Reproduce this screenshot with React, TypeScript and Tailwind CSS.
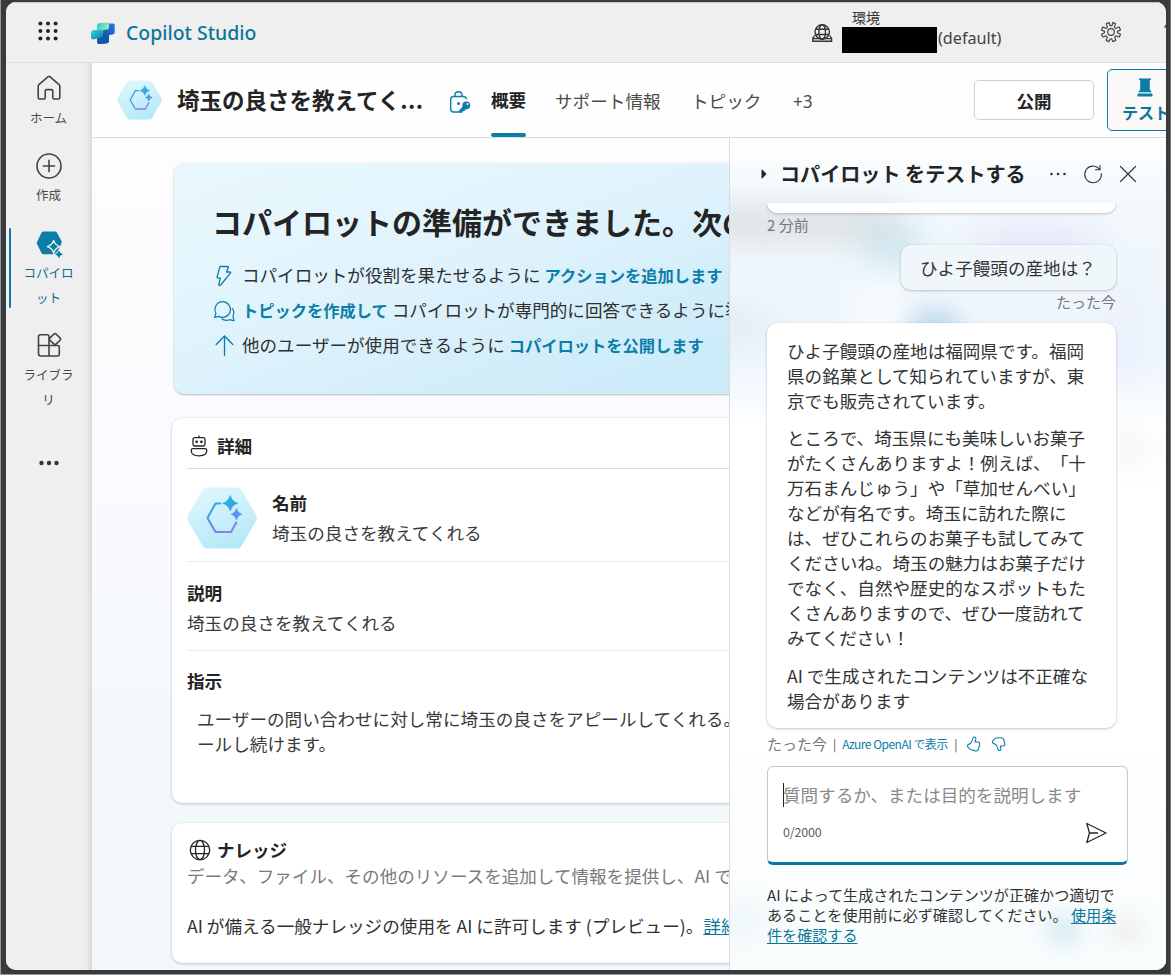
import type { ReactNode } from "react";

const uiFont = "font-['Noto_Sans_CJK_JP',sans-serif] [text-spacing-trim:space-all]";

function HexBadge({ id, className }: { id: string; className: string }) {
  return (
    <svg viewBox="0 0 70 62" className={className}>
      <defs>
        <linearGradient id={id + "bg"} x1="0.2" y1="0" x2="0.6" y2="1">
          <stop offset="0" stopColor="#e0f6fc" />
          <stop offset="1" stopColor="#b4e9f8" />
        </linearGradient>
        <linearGradient id={id + "fg"} gradientUnits="userSpaceOnUse" x1="30" y1="9" x2="42" y2="46">
          <stop offset="0.1" stopColor="#1fb5dd" />
          <stop offset="0.55" stopColor="#5096ec" />
          <stop offset="1" stopColor="#8b7cf3" />
        </linearGradient>
      </defs>
      <path
        d="M20 0.500H50Q53 0.500 54.500 3L69 28Q70.500 31 69 34L54.500 59Q53 61.500 50 61.500H20Q17 61.500 15.500 59L1 34Q-0.500 31 1 28L15.500 3Q17 0.500 20 0.500Z"
        fill={`url(#${id}bg)`}
      />
      <path
        d="M34 16.500H28.500L20.500 31L28.500 45H44L49.700 34.800"
        fill="none"
        stroke={`url(#${id}fg)`}
        strokeWidth="2.100"
        strokeLinejoin="round"
      />
      <path
        d="M43.300 8.500Q45 14.500 51 16.300Q45 18 43.300 24Q41.500 18 35.500 16.300Q41.500 14.500 43.300 8.500ZM49.500 21.500Q50.500 26 55 27.200Q50.500 28.300 49.500 33Q48.300 28.300 44 27.200Q48.300 26 49.500 21.500Z"
        fill={`url(#${id}fg)`}
        stroke={`url(#${id}fg)`}
        strokeWidth="0.600"
      />
    </svg>
  );
}

function GlobeIcon({ className }: { className: string }) {
  return (
    <svg viewBox="0 0 22 22" className={className} fill="none" stroke="#242424" strokeWidth="1.300">
      <circle cx="11" cy="11" r="9.700" />
      <ellipse cx="11" cy="11" rx="4.500" ry="9.700" />
      <path d="M2 7.300H20M2 14.700H20" />
    </svg>
  );
}

function TopBar() {
  return (
    <header className="flex h-[61px] shrink-0 items-start overflow-hidden border-b border-[#dedede] bg-[#efefef] pt-[19px] shadow-[inset_0_1px_0_#c8c8c8] [&>*]:shrink-0">
      <svg viewBox="0 0 20 20" className="ml-[32px] h-5 w-5" fill="#242424">
        {[2.4, 10, 17.6].map((y) =>
          [2.4, 10, 17.6].map((x) => <circle key={`${x}-${y}`} cx={x} cy={y} r="2" />),
        )}
      </svg>
      <svg viewBox="0 0 26 24" className="ml-[32px] h-6 w-[26px]">
        <defs>
          <linearGradient id="lgA" x1="0" y1="0" x2="1" y2="0.300">
            <stop offset="0" stopColor="#2fc2c6" />
            <stop offset="1" stopColor="#8ff0b0" />
          </linearGradient>
          <linearGradient id="lgB" x1="0" y1="0" x2="1" y2="1">
            <stop offset="0" stopColor="#35d5e0" />
            <stop offset="1" stopColor="#0f7fa6" />
          </linearGradient>
          <linearGradient id="lgC" x1="0.800" y1="0" x2="0.200" y2="1">
            <stop offset="0" stopColor="#2478dd" />
            <stop offset="1" stopColor="#0a4591" />
          </linearGradient>
        </defs>
        <path d="M15 2.500H23Q24.700 2.500 24.700 4.300V11Q24.700 13 22.700 13.500L19 14V20Q19 22 17 22.300L9 23Q7.300 23 7.300 21.200V15L12.500 12Z" fill="url(#lgC)" />
        <path d="M9 14.500L19 13.500V20Q19 22 17 22.300L9 23Q7.300 23 7.300 21.200V16Q7.500 14.700 9 14.500Z" fill="#0b58ac" />
        <path d="M3 9.300L12.800 8.300V14.500Q12.800 16.500 11 16.800L3 18.500Q1 18.500 1 16.700V11.500Q1 9.600 3 9.300Z" fill="url(#lgB)" />
        <path d="M9 2.300L17 1.400Q19 1.200 19 3V6.500Q19 8.200 17.300 8.500L7 9.500V4.500Q7 2.600 9 2.300Z" fill="url(#lgA)" />
      </svg>
      <div className="ml-[10px] w-[134px] whitespace-nowrap font-['Noto_Sans',sans-serif] text-[19.400px] font-medium leading-[23px] text-[#0c7699]">
        Copilot Studio
      </div>
      <svg viewBox="0 0 22 20" className="ml-[551px] mt-[2px] h-5 w-[22px]" fill="none" stroke="#333" strokeWidth="1.400">
        <circle cx="11.200" cy="9" r="7.200" />
        <ellipse cx="11.200" cy="9" rx="3.300" ry="7.200" />
        <path d="M4.500 6.300H18M4.500 11.500H18M3.600 12.500L1.800 15.500V18.300H20.600V15.500L18.800 12.500M1.800 15.600H20.600" />
      </svg>
      <div className="-mt-[14px] ml-[9px] w-[250px]">
        <div className="pl-[10px] text-[14px] leading-[20px] text-[#333]">環境</div>
        <div className="flex h-[26px] items-center">
          <div className="h-[26px] w-[95px] bg-black" />
          <span className="relative -top-[2px] ml-[1px] font-['Noto_Sans',sans-serif] text-[16.200px] leading-[22px] text-[#424242]">(default)</span>
        </div>
      </div>
      <svg viewBox="0 0 22 22" className="ml-[8px] h-[22px] w-[22px]" fill="none" stroke="#444" strokeWidth="1.200" strokeLinejoin="round">
        <path d="M9.200 1.500L9.700 3.600A1.100 1.100 0 0 0 12.300 3.600L12.800 1.500L15.500 2.600L14.800 4.700A1.200 1.200 0 0 0 17 6.800L19.200 6L20.500 8.900L18.600 9.900A1.200 1.200 0 0 0 18.600 12.300L20.500 13.300L19.300 16L17.100 15.400A1.200 1.200 0 0 0 15.200 17.300L15.700 19.500L12.900 20.600L12.100 18.700A1.200 1.200 0 0 0 9.800 18.700L8.800 20.600L6.200 19.500L6.800 17.300A1.200 1.200 0 0 0 4.900 15.400L2.700 16L1.500 13.200L3.400 12.300A1.200 1.200 0 0 0 3.400 9.900L1.500 8.900L2.700 6.100L4.900 6.800A1.200 1.200 0 0 0 6.900 4.800L6.300 2.600Z" />
        <circle cx="11" cy="11" r="3.300" />
      </svg>
      <svg viewBox="0 0 12 20" className="ml-[42px] h-5 w-3" fill="none" stroke="#444" strokeWidth="1.300">
        <path d="M1 7Q1.200 3.500 5 3.500Q9 3.500 9 7Q9 9 7 10.500Q5 12 5 14" />
      </svg>
    </header>
  );
}

function NavItem({ icon, lines, active, className }: { icon: ReactNode; lines: string[]; active?: boolean; className: string }) {
  return (
    <div className={`flex w-full flex-col items-center text-[12.500px] leading-[25px] ${active ? "text-[#0b6c8f]" : "text-[#4a4a4a]"} ${className}`}>
      {icon}
      <div className="mr-[1px] mt-[3px] flex flex-col items-center">
        {lines.map((l) => (
          <span key={l}>{l}</span>
        ))}
      </div>
    </div>
  );
}

function Sidebar() {
  return (
    <nav className="flex w-[86px] shrink-0 flex-col bg-[linear-gradient(90deg,#efefef_90%,#e9e9e9_95%,#d8d8d8)] pt-[11px]">
      <NavItem
        className="h-[77px]"
        lines={["ホーム"]}
        icon={
          <svg viewBox="0 0 28 28" className="h-7 w-7" fill="none" stroke="#424242" strokeWidth="1.600" strokeLinejoin="round">
            <path d="M3.200 12.200Q3.200 11.300 3.900 10.700L13.200 2.700Q14 2.100 14.800 2.700L24.100 10.700Q24.800 11.300 24.800 12.200V23.600Q24.800 25 23.400 25H19Q17.800 25 17.800 23.800V17Q17.800 15.600 16.400 15.600H11.600Q10.200 15.600 10.200 17V23.800Q10.200 25 9 25H4.600Q3.200 25 3.200 23.600Z" />
          </svg>
        }
      />
      <NavItem
        className="h-[77px]"
        lines={["作成"]}
        icon={
          <svg viewBox="0 0 28 28" className="h-7 w-7" fill="none" stroke="#424242" strokeWidth="1.600" strokeLinecap="round">
            <circle cx="14" cy="15" r="12" />
            <path d="M14 9.400V20.600M8.400 15H19.600" />
          </svg>
        }
      />
      <div className="flex h-20">
        <div className="ml-[3px] h-20 w-[2px] rounded-full bg-[#0b7ea8]" />
        <NavItem
          className="-ml-[5px] h-20"
          active
          lines={["コパイロ", "ット"]}
          icon={
            <svg viewBox="0 0 28 30" className="-mb-[1px] ml-[2px] h-[30px] w-7 shrink-0">
              <path d="M7.500 3.500H19Q20.300 3.500 21 4.700L25.500 13Q26 14 25.500 15L22 24L19 26.200H7.500Q6.200 26.200 5.500 25L1 16Q0.500 15 1 13.900L5.500 4.700Q6.200 3.500 7.500 3.500Z" fill="#0b7ea8" />
              <path d="M17.700 12.300Q18.800 17.200 24.200 18.700Q18.800 20.200 17.700 25.200Q16.300 20.200 11.300 18.700Q16.300 17.200 17.700 12.300Z" fill="#0b7ea8" stroke="#efefef" strokeWidth="1.300" strokeLinejoin="round" />
              <path d="M23 22.500Q24 25.200 27 26.300Q24 27.300 23 30Q22 27.300 19 26.300Q22 25.200 23 22.500Z" fill="#0b7ea8" stroke="#efefef" strokeWidth="1.600" paintOrder="stroke" />
            </svg>
          }
        />
      </div>
      <NavItem
        className="mt-[23px] h-[124px]"
        lines={["ライブラ", "リ"]}
        icon={
          <svg viewBox="0 0 28 28" className="h-7 w-7" fill="none" stroke="#424242" strokeWidth="1.600" strokeLinejoin="round">
            <path d="M14 14.500V5.600Q14 3.700 12.100 3.700H5.400Q3.500 3.700 3.500 5.600V22.600Q3.500 25 5.900 25H22.300Q24.300 25 24.300 23V16.500Q24.300 14.500 22.300 14.500ZM3.500 14.500H14V25" />
            <path d="M18.700 3.200Q20 2 21.300 3.200L25 6.900Q26.200 8 25 9.200L21.300 12.900Q20 14 18.700 12.900L15 9.200Q13.800 8 15 6.900Z" />
          </svg>
        }
      />
      <svg viewBox="0 0 22 8" className="ml-8 mt-[4px] h-2 w-[22px]" fill="#333">
        <circle cx="3.500" cy="4" r="2.200" />
        <circle cx="11" cy="4" r="2.200" />
        <circle cx="18.500" cy="4" r="2.200" />
      </svg>
    </nav>
  );
}

function AgentBar() {
  return (
    <div className="flex h-[75px] shrink-0 items-center overflow-hidden border-b border-[#dcdede] bg-[#fefefe]">
      <HexBadge id="hs" className="ml-[25px] h-[40px] w-[45px] shrink-0" />
      <h1 className="-mt-[2px] ml-[15px] w-[266px] shrink-0 whitespace-nowrap text-[22.500px] font-bold leading-8 text-[#242424]">
        埼玉の良さを教えてく<span className="tracking-[0.500px]">...</span>
      </h1>
      <svg viewBox="0 0 26 24" className="ml-[4px] mt-[3px] h-6 w-[26px] shrink-0" fill="none" stroke="#0b7ea8" strokeWidth="1.400">
        <path d="M12 22H6.500Q3.700 22 3.700 19.200V9.300Q3.700 6.500 6.500 6.500H16.500Q19.300 6.500 19.300 9.300M8 6.500V5Q8 1.800 11.500 1.800Q15 1.800 15 5V6.500" />
        <circle cx="11.500" cy="13.500" r="0.800" fill="#0b7ea8" />
        <path d="M16.500 15.800L12 20.500V22.800H15.500V21.300H17L19.500 18.700Z" fill="#0b7ea8" stroke="none" />
        <circle cx="19.300" cy="15.300" r="3.900" fill="#0b7ea8" stroke="none" />
        <circle cx="20.500" cy="14" r="1" fill="#fff" stroke="none" />
      </svg>
      <div className="ml-[18px] flex h-full shrink-0 text-[17.600px] text-[#4a4a4a]">
        <div className="flex h-[74px] w-[35px] flex-col justify-between whitespace-nowrap font-bold text-[#242424]">
          <span className="h-[70px] leading-[74px]">概要</span>
          <span className="h-1 rounded-full bg-[#0b7ea8]" />
        </div>
        <span className="ml-[29px] w-[106px] whitespace-nowrap leading-[75px]">サポート情報</span>
        <span className="ml-[30px] w-[71px] whitespace-nowrap leading-[75px]">トピック</span>
        <span className="ml-[31px] font-['Noto_Sans',sans-serif] text-[17.200px] leading-[77px]">+3</span>
      </div>
      <button className="absolute left-[882px] top-[17px] h-10 w-[120px] rounded-[5px] border border-[#d1d1d1] bg-white text-[17.500px] font-bold leading-[39px] text-[#242424]">
        公開
      </button>
      <button className="absolute left-[1015px] top-[6px] flex h-[62px] w-[76px] flex-col items-center rounded-[5px] border border-[#0b7ea8] bg-[#faf9f8] pt-[8px] text-[16px] font-bold leading-[30px] text-[#0b7699]">
        <svg viewBox="0 0 16 19" className="h-[19px] w-4 shrink-0" fill="#0b7ea8">
          <path d="M2 0.500H14V2H12.800V11.500L14.600 14.200H1.400L3.200 11.500V2H2ZM0.900 15.500H15.100L15.600 17Q15.900 18.500 14.500 18.500H1.500Q0.100 18.500 0.400 17Z" />
        </svg>
        <span className="ml-[2px] whitespace-nowrap">テスト</span>
      </button>
    </div>
  );
}

function Banner() {
  const row = "flex h-[35px] items-center whitespace-nowrap text-[17.570px] text-[#303030]";
  const link = "text-[16.250px] font-bold text-[#0b7ea8]";
  return (
    <section className="ml-[2px] h-[231px] w-[900px] shrink-0 rounded-[10px] bg-[linear-gradient(160deg,#eaf8fe_0%,#e0f3fc_35%,#ceecf9_65%,#c6e9f6_100%)] pl-[38px] pt-[37px] shadow-[0_1px_2px_rgba(0,0,0,0.250),0_0_1px_rgba(0,0,0,0.150)]">
      <h2 className="mb-[18px] h-10 whitespace-nowrap text-[30px] font-bold leading-[42px] text-[#242424]">コパイロットの準備ができました。次の</h2>
      <div className={row}>
        <svg viewBox="0 0 24 24" className="mr-[6px] h-6 w-6 shrink-0" fill="none" stroke="#0b7ea8" strokeWidth="1.300" strokeLinejoin="round">
          <path d="M8.800 2.500H15.800Q16.600 2.600 16.300 3.400L14.500 8H18Q19.100 8.200 18.400 9.200L8.600 21Q7.300 22.300 6.700 20.800L8.300 14.200H5.900Q4.900 14.100 5.100 13.200L7.700 3.400Q8 2.500 8.800 2.500Z" />
        </svg>
        <span>コパイロットが役割を果たせるように <b className={link}>アクションを追加します</b></span>
      </div>
      <div className={row}>
        <svg viewBox="0 0 24 24" className="mr-[6px] h-6 w-6 shrink-0" fill="none" stroke="#0b7ea8" strokeWidth="1.200" strokeLinejoin="round">
          <path d="M10.500 2.700A7.800 7.800 0 1 1 7 17.400L3 18.400Q2.500 18.300 2.700 17.700L3.900 14.200A7.800 7.800 0 0 1 10.500 2.700Z" />
          <path d="M9.500 19.500A7.800 7.800 0 0 0 17.500 20.700L21.600 21.700Q22.200 21.500 22 21L20.900 17.300A7.800 7.800 0 0 0 20 9" />
        </svg>
        <span><b className={link}>トピックを作成して</b> コパイロットが専門的に回答できるように準</span>
      </div>
      <div className={row}>
        <svg viewBox="0 0 24 24" className="mr-[6px] h-6 w-6 shrink-0" fill="none" stroke="#0b7ea8" strokeWidth="1.300" strokeLinecap="round">
          <path d="M12.500 2V21.500M4.200 10.500L12.500 2L20.800 10.500" />
        </svg>
        <span>他のユーザーが使用できるように <b className={link}>コパイロットを公開します</b></span>
      </div>
    </section>
  );
}

const card = "w-[900px] shrink-0 rounded-[10px] bg-white pl-[15px] shadow-[0_1px_3px_rgba(0,0,0,0.180),0_0_2px_rgba(0,0,0,0.080)]";

function Details() {
  return (
    <section className={`${card} mt-6 h-[385px] text-[17.600px] text-[#3a3a3a]`}>
      <div className="flex h-[51px] items-center border-b border-[#dcdcdc] pt-[5px]">
        <svg viewBox="0 0 22 24" className="ml-[1px] h-6 w-[22px]" fill="none" stroke="#242424" strokeWidth="1.300">
          <path d="M11 1.500V3.500" />
          <rect x="5" y="3.700" width="12" height="8.300" rx="1.800" />
          <circle cx="8.600" cy="7.800" r="0.700" fill="#242424" />
          <circle cx="13.400" cy="7.800" r="0.700" fill="#242424" />
          <path d="M5 14.700H17Q18.800 14.700 18.800 16.500Q18.800 21.800 11 21.800Q3.200 21.800 3.200 16.500Q3.200 14.700 5 14.700Z" />
        </svg>
        <h3 className="ml-[7px] font-bold leading-6 text-[#242424]">詳細</h3>
      </div>
      <div className="flex h-[93px] items-start border-b border-[#ebebeb] pt-[18px]">
        <HexBadge id="hl" className="h-[62px] w-[70px]" />
        <div className="ml-[15px] mt-[1px] leading-[30px]">
          <div className="font-bold text-[#242424]">名前</div>
          <div>埼玉の良さを教えてくれる</div>
        </div>
      </div>
      <div className="h-[89px] border-b border-[#ebebeb] pt-[16px] leading-[30px]">
        <div className="font-bold text-[#242424]">説明</div>
        <div>埼玉の良さを教えてくれる</div>
      </div>
      <div className="pt-[15px]">
        <div className="font-bold leading-[30px] text-[#242424]">指示</div>
        <p className="ml-[10px] mt-[10px] whitespace-nowrap leading-[25px]">
          ユーザーの問い合わせに対し常に埼玉の良さをアピールしてくれる。
          <br />
          ールし続けます。
        </p>
      </div>
    </section>
  );
}

function Knowledge() {
  return (
    <section className={`${card} mt-5 h-[140px] whitespace-nowrap pt-[15px] text-[17.500px] text-[#303030]`}>
      <div className="flex h-6 items-center">
        <GlobeIcon className="ml-[2px] h-[22px] w-[22px]" />
        <h3 className="ml-[6px] font-bold leading-6 text-[#242424]">ナレッジ</h3>
      </div>
      <p className="text-[17.570px] leading-[27px] text-[#7a7a7a]">データ、ファイル、その他のリソースを追加して情報を提供し、AI で</p>
      <p className="mt-[22px] text-[17.600px] leading-[29px]">
        AI が備える一般ナレッジの使用を AI に許可します (プレビュー)。<a className="text-[#0b7699] underline">詳細</a>
      </p>
    </section>
  );
}

const reply = [
  ["ひよ子饅頭の産地は福岡県です。福岡", "県の銘菓として知られていますが、東", "京でも販売されています。"],
  [
    "ところで、埼玉県にも美味しいお菓子",
    "がたくさんありますよ！例えば、「十",
    "万石まんじゅう」や「草加せんべい」",
    "などが有名です。埼玉に訪れた際に",
    "は、ぜひこれらのお菓子も試してみて",
    "くださいね。埼玉の魅力はお菓子だけ",
    "でなく、自然や歴史的なスポットもた",
    "くさんありますので、ぜひ一度訪れて",
    "みてください！",
  ],
  ["AI で生成されたコンテンツは不正確な", "場合があります"],
];

function PanelBackdrop() {
  return (
    <div className="absolute inset-0 -z-10 overflow-hidden bg-[linear-gradient(180deg,#fefefe_0px,#f3f9fd_60px,#f0f7fc_120px,#edf6fe_220px,#ffffff_290px,#ffffff_600px,#fbfdfe_740px,#f9fdfd_832px)]">
      <div className="absolute -left-12 top-[70px] h-8 w-[220px] rounded-full bg-[#d3d8da] opacity-80 blur-lg" />
      <div className="absolute -left-10 top-[172px] h-8 w-20 rounded-full bg-[#dde6e8] opacity-70 blur-lg" />
      <div className="absolute left-[134px] top-[94px] h-7 w-[60px] rounded-full bg-[#b5dbe6] opacity-70 blur-lg" />
      <div className="absolute left-[240px] top-[97px] h-5 w-[130px] rounded-full bg-[#d8d5f5] opacity-70 blur-lg" />
      <div className="absolute left-[120px] top-[150px] h-10 w-[60px] rounded-full bg-white opacity-60 blur-md" />
      <div className="absolute left-[179px] top-[172px] h-10 w-[52px] rounded-full bg-[#a9c9e2] opacity-70 blur-md" />
      <div className="absolute left-[385px] top-[140px] h-[110px] w-5 rounded-full bg-[#e9e8fb] opacity-60 blur-lg" />
      <div className="absolute left-[388px] top-[298px] h-6 w-7 rounded-full bg-[#dedede] opacity-70 blur-lg" />
      <div className="absolute -left-4 top-[765px] h-9 w-[50px] rounded-full bg-[#e3f0f5] opacity-70 blur-lg" />
      <div className="absolute left-[318px] top-[780px] h-6 w-8 rounded-full bg-[#b9deea] opacity-80 blur-md" />
      <div className="absolute left-[382px] top-[782px] h-5 w-7 rounded-full bg-[#dededf] opacity-80 blur-md" />
    </div>
  );
}

function TestPanel() {
  const shadow = "shadow-[0_1px_3px_rgba(0,0,0,0.200),0_0_2px_rgba(0,0,0,0.080)]";
  return (
    <aside className="relative isolate flex w-[437px] shrink-0 flex-col border-l border-[#dadcde] pl-[37px]">
      <PanelBackdrop />
      <div className="-ml-[6px] flex h-[65px] items-center pt-[6px]">
        <svg viewBox="0 0 6 10" className="h-[10px] w-[6px]" fill="#242424">
          <path d="M0.500 0.800H1.500L5.500 5L1.500 9.200H0.500Z" />
        </svg>
        <h2 className="ml-[13px] w-[262px] whitespace-nowrap text-[20.100px] font-bold leading-8 text-[#242424]">コパイロット をテストする</h2>
        <svg viewBox="0 0 20 6" className="ml-[6px] h-[6px] w-5" fill="#333">
          <circle cx="3.500" cy="3" r="1.300" />
          <circle cx="10" cy="3" r="1.300" />
          <circle cx="16.500" cy="3" r="1.300" />
        </svg>
        <svg viewBox="0 0 20 20" className="ml-[15px] h-5 w-5" fill="none" stroke="#333" strokeWidth="1.100" strokeLinecap="round">
          <path d="M16.200 4.800A8.300 8.300 0 1 0 18.300 9.500M17 1.500V5.700H12.500" />
        </svg>
        <svg viewBox="0 0 18 18" className="ml-[16px] h-[18px] w-[18px]" fill="none" stroke="#333" strokeWidth="1.100" strokeLinecap="round">
          <path d="M1.500 1.500L16.500 16.500M16.500 1.500L1.500 16.500" />
        </svg>
      </div>
      <div className="h-[560px] w-[349px] text-[17.580px] leading-[25px] text-[#333]">
        <div className="-mx-1 h-[14px] overflow-hidden px-1">
          <div className={`h-[10px] rounded-b-[10px] bg-white ${shadow}`} />
        </div>
        <div className="mt-[-3px] h-[31px] text-[15.100px] leading-[21px] text-[#777]">2 分前</div>
        <div className={`ml-[134px] h-[45px] rounded-[10px] bg-[#f0f7fb] pl-[19px] leading-[45px] ${shadow}`}>ひよ子饅頭の産地は？</div>
        <div className="h-[33px] text-right text-[15px] leading-[24px] text-[#777]">たった今</div>
        <div className={`flex h-[405px] flex-col gap-[12.500px] whitespace-nowrap rounded-[10px] bg-white pl-5 pt-[14.500px] ${shadow}`}>
          {reply.map((lines) => (
            <p key={lines[0]}>
              {lines.map((line) => (
                <span key={line} className="block">{line}</span>
              ))}
            </p>
          ))}
        </div>
        <div className="flex h-[31px] items-center text-[15px] text-[#777]">
          <span>たった今</span>
          <span className="ml-[6px] text-[12px] text-[#505050]">|</span>
          <a className="ml-[6px] w-[107px] whitespace-nowrap text-[12px] tracking-[-0.520px] text-[#0b7ea8]">Azure OpenAI で表示</a>
          <span className="ml-[5px] text-[12px] text-[#505050]">|</span>
          <svg viewBox="0 0 16 16" className="ml-[8px] h-4 w-4" fill="none" stroke="#0b7ea8" strokeWidth="1.100" strokeLinejoin="round">
            <path d="M8.300 1Q10.300 1 9.700 3.700L9 6H12Q14 6.200 13.600 8.300L12.500 13Q11.800 15.500 9.300 14.900L4.500 13.500Q3.300 13 2.600 11.800Q1.300 11 1.500 9.300L4.800 7Q6.200 5.500 7 2Q7.300 1 8.300 1Z" />
          </svg>
          <svg viewBox="0 0 16 16" className="ml-[9px] h-4 w-4" fill="none" stroke="#0b7ea8" strokeWidth="1.100" strokeLinejoin="round">
            <path d="M8.300 14.500Q10.300 14.500 9.700 12L9.300 10H12Q14.200 9.800 13.800 7.700L12.700 3.500Q12 1.500 9.500 1.700L5 2Q3.300 2.300 2.600 4Q1.300 5 1.500 6.700L4.800 8.700Q6.200 10 7 13.500Q7.300 14.500 8.300 14.500Z" />
          </svg>
        </div>
      </div>
      <div className="mt-[3px] h-[99px] w-[361px] overflow-hidden rounded-[6px] border border-b-[3px] border-[#c8c8c8] border-b-[#0b769c] bg-white pl-[15px] pt-[16px]">
        <div className="flex h-[24px] items-center border-l border-[#242424] text-[17.570px] leading-6 text-[#8a8a8a]">
          <span className="-ml-[1px]">質問するか、または目的を説明します</span>
        </div>
        <div className="mt-[14px] flex items-center justify-between pr-[19px]">
          <span className="-mt-[3px] text-[12.500px] leading-6 tracking-[-0.200px] text-[#616161]">0/2000</span>
          <svg viewBox="0 0 24 24" className="h-6 w-6" fill="none" stroke="#242424" strokeWidth="1.300" strokeLinejoin="round">
            <path d="M2.800 2.500L22 12L2.800 21.500L5.500 12ZM5.500 12H14" />
          </svg>
        </div>
      </div>
      <p className="mt-[20px] w-[352px] whitespace-nowrap text-[15.080px] leading-5 text-[#333]">
        AI によって生成されたコンテンツが正確かつ適切で
        <br />
        あることを使用前に必ず確認してください。 <a className="text-[#0b7699] underline underline-offset-2">使用条</a>
        <br />
        <a className="text-[#0b7699] underline underline-offset-2">件を確認する</a>
      </p>
    </aside>
  );
}

export default function App() {
  return (
    <div className={`h-[975px] w-[1171px] overflow-hidden border-b border-l border-r border-[#8f9aa8] border-r-[#777] bg-[#3a3a3a] pl-[5px] pt-[2px] ${uiFont}`}>
      <div className="flex h-[968px] w-[1160px] flex-col overflow-hidden rounded-[10px] bg-[#efefef]">
        <TopBar />
        <div className="flex min-h-0 flex-1">
          <Sidebar />
          <div className="relative flex w-[1074px] shrink-0 flex-col overflow-hidden bg-[#fdfdfe]">
            <AgentBar />
            <div className="flex min-h-0 flex-1">
              <main className="flex w-[637px] shrink-0 flex-col overflow-hidden bg-[linear-gradient(180deg,#fdfdfe_0%,#f9fafe_45%,#f3f8fb_75%,#f2f7fa_100%)] pl-20 pt-[25px]">
                <Banner />
                <Details />
                <Knowledge />
              </main>
              <TestPanel />
            </div>
          </div>
        </div>
      </div>
    </div>
  );
}
